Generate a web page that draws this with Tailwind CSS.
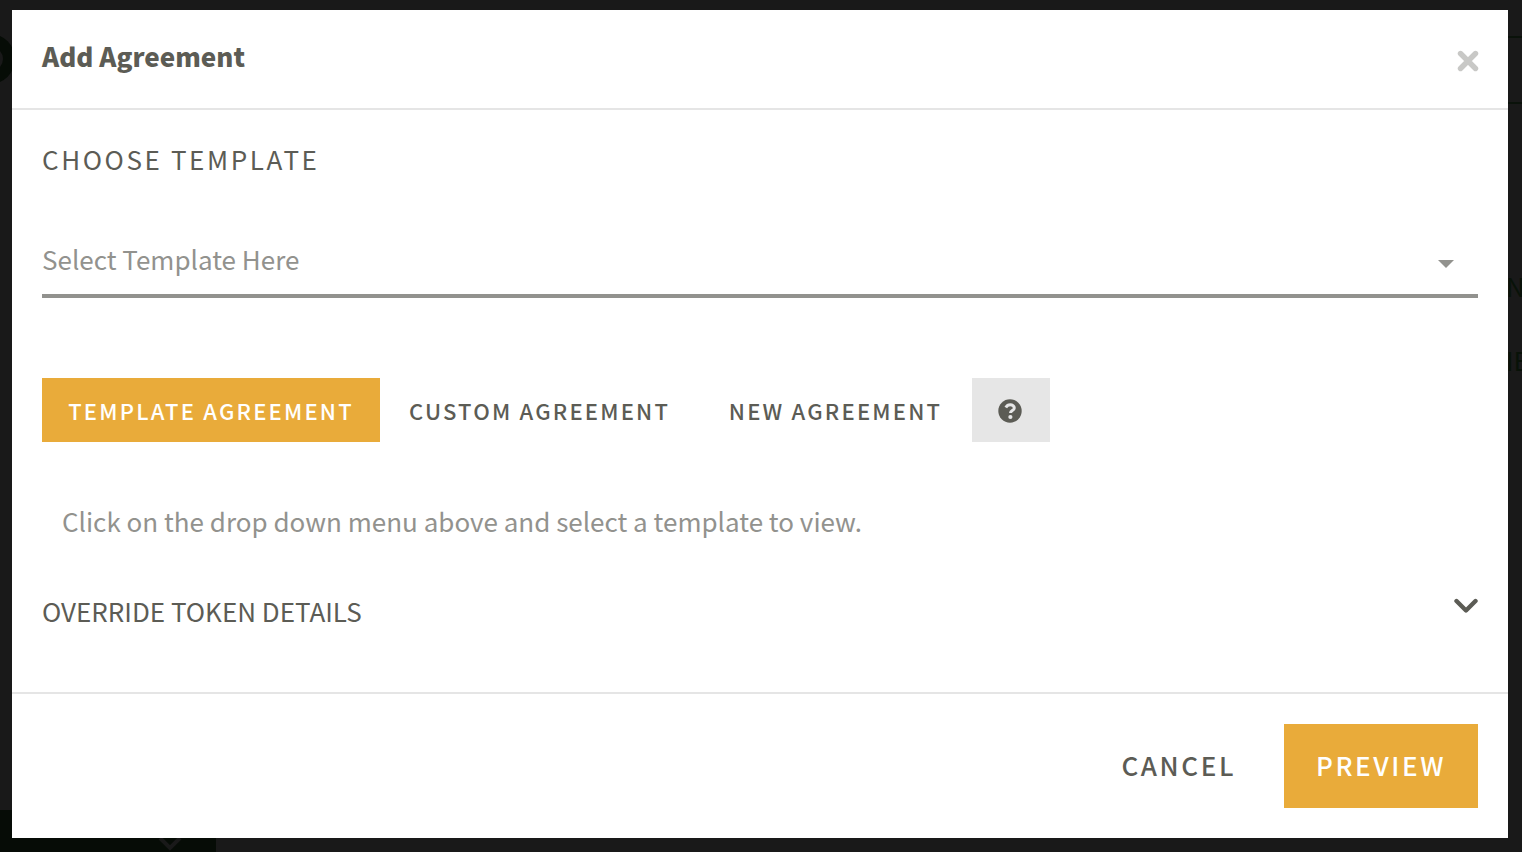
<!DOCTYPE html>
<html lang="en">
<head>
    <meta charset="UTF-8">
    <meta name="viewport" content="width=device-width, initial-scale=1.0">
    <title>Add Agreement</title>
    <script src="https://cdn.jsdelivr.net/npm/@tailwindcss/browser@4"></script>
</head>
<body class="bg-[#191919] min-h-screen overflow-hidden font-['Noto_Sans_CJK_SC','Noto_Sans',sans-serif] text-[#5c5c55]">

    <!-- Page behind the modal -->
    <div class="h-screen flex justify-between overflow-hidden" aria-hidden="true">
        <div class="w-[216px] flex flex-col justify-between">
            <div class="mt-[34px] -ml-[35px] size-[50px] rounded-full bg-[#060c06] flex items-center justify-end pr-3">
                <div class="w-6 h-6 rounded-full bg-[#191919]"></div>
            </div>
            <div class="h-[42px] bg-[#060c06] flex items-end justify-end pr-[34px]">
                <svg class="w-6 h-4" viewBox="0 0 24 16" fill="none" stroke="#191919" stroke-width="4"><path d="M2 2l10 10L22 2"/></svg>
            </div>
        </div>
        <div class="w-4 text-[#081208] text-[26px] leading-8">
            <div class="mt-9 h-[68px] border-y-2 border-[#0a120a]"></div>
            <div class="mt-[166px]">N</div>
            <div class="mt-[42px] whitespace-nowrap">IE</div>
        </div>
    </div>

    <!-- Modal -->
    <div class="absolute inset-x-0 top-0 pt-[10px] pl-3 pr-[14px]">
        <div role="dialog" aria-labelledby="modalTitle" class="bg-white">
            <div class="h-[100px] pl-[30px] pr-[29px] pt-7 flex items-start justify-between border-b-2 border-[#e5e5e5]">
                <h1 id="modalTitle" class="text-[26px] leading-9 font-black">Add Agreement</h1>
                <button type="button" aria-label="Close" class="py-3 text-[#c8c8c6] cursor-pointer">
                    <svg class="size-[22px]" viewBox="0 0 22 22" fill="none" stroke="currentColor" stroke-width="5.4" stroke-linecap="round"><path d="M3.500 3.500l15 15M18.500 3.500l-15 15"/></svg>
                </button>
            </div>

            <div class="px-[30px] pt-[31px] pb-[63px]">
                <label for="template" class="block text-[26px] leading-9 tracking-widest uppercase">Choose Template</label>
                <div class="relative mt-[51px]">
                    <select id="template" class="block w-full h-[70px] pb-1.5 appearance-none bg-transparent border-b-4 border-[#92928e] text-[26px] text-[#92928e] outline-none">
                        <option>Select Template Here</option>
                    </select>
                    <svg class="absolute right-6 top-8 w-4 h-2 pointer-events-none" viewBox="0 0 16 8" fill="#92928e"><path d="M0 0h16L8 8z"/></svg>
                </div>

                <div class="mt-20 flex h-16 text-[22px] font-medium tracking-widest">
                    <button type="button" class="w-[338px] bg-[#e9ab3a] text-white uppercase cursor-pointer">Template Agreement</button>
                    <button type="button" class="w-[319px] uppercase cursor-pointer">Custom Agreement</button>
                    <button type="button" class="w-[273px] uppercase cursor-pointer">New Agreement</button>
                    <button type="button" aria-label="Help" class="w-[78px] pt-0.5 pr-0.5 bg-[#e6e6e6] flex items-center justify-center cursor-pointer">
                        <svg class="size-6" viewBox="0 0 24 24" fill="none"><circle cx="12" cy="12" r="11.700" fill="currentColor"/><path d="M7.800 8.400C8.800 6.700 10.200 5.800 12.200 5.800c2.300 0 4.100 1.300 4.100 3.100 0 2.700-3.800 2.700-3.800 5.100" stroke="#e6e6e6" stroke-width="3"/><circle cx="12.400" cy="18" r="2.100" fill="#e6e6e6"/></svg>
                    </button>
                </div>

                <p class="mt-[61px] pl-5 text-[26px] leading-9 text-[#92928e]">Click on the drop down menu above and select a template to view.</p>

                <button type="button" class="mt-[54px] w-full flex items-start justify-between text-[26px] leading-9 cursor-pointer">
                    <span class="uppercase">Override Token Details</span>
                    <svg class="w-6 h-4 mt-[5px]" viewBox="0 0 24 16" fill="none" stroke="currentColor" stroke-width="4.400" stroke-linecap="round" stroke-linejoin="round"><path d="M2.500 3l9.500 9.500L21.500 3"/></svg>
                </button>
            </div>

            <div class="p-[30px] flex justify-end border-t-2 border-[#e5e5e5] text-[26px] font-medium tracking-widest">
                <button type="button" class="px-12 pb-1 uppercase cursor-pointer">Cancel</button>
                <button type="button" class="w-[194px] h-[84px] pb-1 bg-[#e9ab3a] text-white uppercase cursor-pointer">Preview</button>
            </div>
        </div>
    </div>
</body>
</html>
